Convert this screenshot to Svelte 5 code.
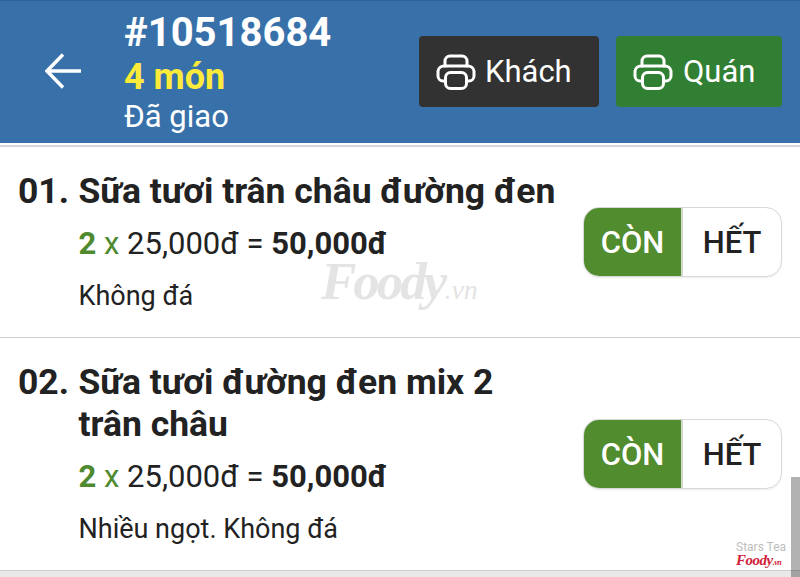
<script>
  const items = [
    { no: '01.', name: 'Sữa tươi trân châu đường đen', qty: 2, price: '25,000đ', total: '50,000đ', note: 'Không đá' },
    { no: '02.', name: 'Sữa tươi đường đen mix 2 trân châu', qty: 2, price: '25,000đ', total: '50,000đ', note: 'Nhiều ngọt. Không đá' }
  ];
</script>

{#snippet printer()}
  <svg class="printer" viewBox="0 0 40 36" fill="none" stroke="currentColor" stroke-width="3" stroke-linejoin="round" stroke-linecap="round">
    <path d="M9 12V7a5 5 0 0 1 5-5h12a5 5 0 0 1 5 5v5" />
    <path d="M9 27H7a5 5 0 0 1-5-5v-5a6 6 0 0 1 6-5h24a6 6 0 0 1 6 5v5a5 5 0 0 1-5 5h-2" />
    <rect x="9.500" y="18.500" width="21" height="16" rx="5" />
  </svg>
{/snippet}

<div class="page">
  <header class="top">
    <svg class="back" viewBox="0 0 36 36" fill="none" stroke="#fff" stroke-width="3.400">
      <path d="M36 18H3M18 1.500 2 18l16 16.500" />
    </svg>
    <div class="info">
      <div class="id">#10518684</div>
      <div class="count">4 món</div>
      <div class="status">Đã giao</div>
    </div>
    <div class="actions">
      <button class="print dark">{@render printer()}Khách</button>
      <button class="print green">{@render printer()}Quán</button>
    </div>
  </header>
  <div class="rule"></div>

  <main>
    {#each items as item}
      <section class="item">
        <div class="no">{item.no}</div>
        <div class="body">
          <h2>{item.name}</h2>
          <div class="price"><b class="qty">{item.qty}</b> <span class="x">x</span> {item.price} = <b>{item.total}</b></div>
          <div class="note">{item.note}</div>
        </div>
        <div class="toggle">
          <span class="on">CÒN</span>
          <span class="off">HẾT</span>
        </div>
      </section>
    {/each}
  </main>
  <div class="footer"></div>

  <div class="mark">Foody<small>.vn</small></div>
  <div class="stamp">
    <span>Stars Tea</span>
    <strong>Foody<small>.vn</small></strong>
  </div>
  <div class="scroll"></div>
</div>

<style>
  :global(body) {
    margin: 0;
    background: #fff;
  }
  .page {
    position: relative;
    width: 800px;
    height: 577px;
    overflow: hidden;
    font-family: Roboto, "Liberation Sans", sans-serif;
    color: #222;
    background: #fff;
  }
  .top {
    box-sizing: border-box;
    height: 143px;
    display: flex;
    align-items: center;
    background: #3871aa;
    border-top: 1px solid #2b6496;
    padding-left: 45px;
    color: #fff;
  }
  .back {
    width: 36px;
    height: 36px;
    flex: none;
    margin-top: -2px;
  }
  .info {
    margin-left: 43px;
    width: 295px;
    flex: none;
    margin-top: 2px;
  }
  .id {
    font-size: 40px;
    line-height: 46px;
    font-weight: 700;
  }
  .count {
    font-size: 36px;
    line-height: 42px;
    font-weight: 700;
    color: #fdeb3b;
  }
  .status {
    font-size: 31px;
    line-height: 38px;
  }
  .actions {
    display: flex;
    gap: 17px;
    margin-top: -1px;
  }
  .print {
    display: flex;
    align-items: center;
    height: 71px;
    border: 0;
    border-radius: 4px;
    padding: 0 0 0 17px;
    color: #fff;
    font: 400 31px Roboto, sans-serif;
    gap: 10px;
  }
  .dark {
    width: 180px;
    background: #323232;
    gap: 9px;
  }
  .green {
    width: 166px;
    background: #317f33;
  }
  .printer {
    width: 40px;
    height: 36px;
    flex: none;
  }
  .rule {
    height: 2px;
    margin-top: 2px;
    background: #d3d6dc;
  }
  .item {
    box-sizing: border-box;
    display: flex;
    align-items: flex-start;
    padding: 23px 18px 0;
    border-bottom: 1px solid #cfcfcf;
  }
  .item:nth-child(1) { height: 191px; }
  .item:nth-child(2) { height: 233px; }
  .no {
    width: 60.500px;
    flex: none;
    font-size: 35.500px;
    line-height: 42px;
    font-weight: 700;
  }
  .body {
    width: 504.500px;
    flex: none;
  }
  h2 {
    margin: 0;
    font-size: 35.500px;
    line-height: 42px;
    font-weight: 700;
    max-width: 480px;
  }
  .price {
    margin-top: 13px;
    font-size: 31px;
    line-height: 38px;
  }
  .price b { font-weight: 700; }
  .qty { color: #4f8a2f; }
  .x { color: #4f8a2f; }
  .note {
    margin-top: 17px;
    font-size: 27px;
    line-height: 32px;
  }
  .toggle {
    align-self: center;
    display: flex;
    box-sizing: border-box;
    width: 199px;
    height: 70px;
    margin-top: -23px;
    border: 1px solid #d8d8d8;
    border-radius: 16px;
    overflow: hidden;
    font-size: 31px;
    font-weight: 500;
    box-shadow: 0 1px 2px rgba(0,0,0,.08);
  }
  .toggle span {
    display: flex;
    align-items: center;
    justify-content: center;
  }
  .on {
    width: 97px;
    background: #518c2e;
    color: #fff;
    border-right: 2px solid #d2d8cc;
  }
  .off {
    flex: 1;
    color: #222;
  }
  .footer {
    height: 7px;
    background: #e9e9e9;
  }
  .mark {
    position: absolute;
    left: 321px;
    top: 264px;
    font: italic 700 53px/34px "Liberation Serif", serif;
    color: #e4e4e4;
    letter-spacing: -3px;
    pointer-events: none;
  }
  .mark small {
    font-size: 28px;
    font-weight: 400;
    letter-spacing: 0;
  }
  .stamp {
    position: absolute;
    left: 736px;
    top: 541px;
    display: flex;
    flex-direction: column;
    font-size: 12px;
    line-height: 13px;
    color: #bdbdbd;
  }
  .stamp strong {
    font: italic 700 15px/13px "Liberation Serif", serif;
    color: #d0213a;
    letter-spacing: -.5px;
  }
  .stamp small {
    font-size: 8px;
  }
  .scroll {
    position: absolute;
    right: 0;
    top: 477px;
    width: 9px;
    height: 100px;
    background: rgba(0,0,0,.3);
  }
</style>
